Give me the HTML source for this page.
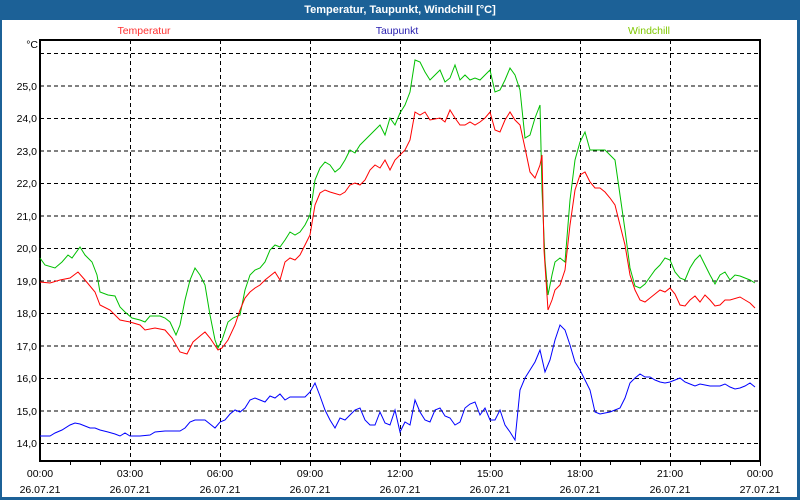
<!DOCTYPE html>
<html><head><meta charset="utf-8"><style>
html,body{margin:0;padding:0;background:#fff}
svg{display:block;font-family:"Liberation Sans",sans-serif}
</style></head><body>
<svg width="800" height="500" xmlns="http://www.w3.org/2000/svg">
<rect x="0" y="0" width="800" height="500" fill="#1c6197"/>
<rect x="2" y="20" width="795" height="477" fill="#fff"/>
<text x="400" y="13" fill="#fff" font-size="11" font-weight="bold" text-anchor="middle">Temperatur, Taupunkt, Windchill [°C]</text>
<text x="144" y="34" fill="#ff3030" font-size="10.5" text-anchor="middle">Temperatur</text>
<text x="397" y="34" fill="#2a20b0" font-size="10.5" text-anchor="middle">Taupunkt</text>
<text x="649" y="34" fill="#80c800" font-size="10.5" text-anchor="middle">Windchill</text>
<g stroke="#000" stroke-width="1" stroke-dasharray="4,3" fill="none">
<path d="M40 53.5H760M40 86H760M40 118.5H760M40 151H760M40 183.5H760M40 216H760M40 248.5H760M40 281H760M40 313.5H760M40 346H760M40 378.5H760M40 411H760M40 443.5H760"/>
<path d="M130.5 40V461M220.5 40V461M310.5 40V461M400.5 40V461M490.5 40V461M580.5 40V461M670.5 40V461"/>
</g>
<g stroke="#000" stroke-width="1">
<path d="M70.5 461V465M100.5 461V465M130.5 461V466M160.5 461V465M190.5 461V465M220.5 461V466M250.5 461V465M280.5 461V465M310.5 461V466M340.5 461V465M370.5 461V465M400.5 461V466M430.5 461V465M460.5 461V465M490.5 461V466M520.5 461V465M550.5 461V465M580.5 461V466M610.5 461V465M640.5 461V465M670.5 461V466M700.5 461V465M730.5 461V465M760.5 461V466"/>
</g>
<rect x="40" y="40" width="720" height="421" fill="none" stroke="#000" stroke-width="2"/>
<g font-size="10.5" fill="#000" text-anchor="end">
<text x="38" y="48">°C</text>
<text x="37" y="90">25,0</text><text x="37" y="122">24,0</text><text x="37" y="155">23,0</text><text x="37" y="187">22,0</text><text x="37" y="220">21,0</text><text x="37" y="252">20,0</text><text x="37" y="285">19,0</text><text x="37" y="317">18,0</text><text x="37" y="350">17,0</text><text x="37" y="382">16,0</text><text x="37" y="415">15,0</text><text x="37" y="447">14,0</text>
</g>
<g font-size="10.5" fill="#000" text-anchor="middle">
<text x="40" y="477">00:00</text><text x="130" y="477">03:00</text><text x="220" y="477">06:00</text><text x="310" y="477">09:00</text><text x="400" y="477">12:00</text><text x="490" y="477">15:00</text><text x="580" y="477">18:00</text><text x="670" y="477">21:00</text><text x="760" y="477">00:00</text>
<text x="40" y="493">26.07.21</text><text x="130" y="493">26.07.21</text><text x="220" y="493">26.07.21</text><text x="310" y="493">26.07.21</text><text x="400" y="493">26.07.21</text><text x="490" y="493">26.07.21</text><text x="580" y="493">26.07.21</text><text x="670" y="493">26.07.21</text><text x="760" y="493">27.07.21</text>
</g>
<g fill="none" stroke-width="1">
<polyline stroke="#00c000" points="40,258 45,265 55,268 62,262 68,255 72,258 80,247 85,255 92,262 97,275 100,292 108,295 115,296 120,307 125,312 132,318 140,320 145,322 150,316 160,316 165,318 170,322 176,335 180,325 185,300 190,280 195,268 200,275 205,285 210,315 215,340 218,348 222,340 228,322 233,318 240,315 245,290 250,275 255,270 260,268 265,262 270,250 275,245 280,247 285,240 290,232 295,235 300,232 305,225 310,215 315,180 320,168 325,162 330,165 335,172 340,168 345,160 350,150 355,153 360,145 365,140 370,135 375,130 380,125 385,135 390,118 395,125 400,113 405,105 410,92 415,60 420,62 425,72 430,80 435,75 440,70 445,82 450,78 455,65 460,80 465,75 470,80 475,78 480,80 485,75 490,70 495,92 500,90 505,80 510,68 515,75 520,90 525,138 530,135 535,118 540,105 542,190 545,260 548,295 552,275 555,262 560,258 565,262 570,200 575,160 580,142 585,132 590,150 595,150 600,150 605,150 610,155 615,160 620,195 625,230 630,268 635,286 640,288 645,284 650,277 655,270 660,265 665,258 670,260 675,272 680,278 685,280 690,268 695,260 700,255 705,265 710,275 715,284 720,275 725,272 730,280 735,275 740,276 745,278 750,280 755,283"/>
<polyline stroke="#ff0000" points="40,282 50,283 60,280 70,278 78,272 85,280 95,292 100,305 110,310 120,320 130,322 140,325 145,330 155,328 165,330 172,338 180,352 187,354 193,342 200,336 205,332 210,338 218,350 222,348 228,340 235,325 240,310 245,298 250,292 255,288 260,285 265,280 275,272 280,280 285,262 290,258 295,260 300,255 305,245 310,235 315,205 320,193 325,190 330,192 340,195 345,192 350,185 355,183 360,185 365,180 370,170 375,165 380,168 385,160 390,170 395,160 400,155 405,150 410,140 415,112 420,115 425,112 430,120 440,118 445,122 450,110 455,118 460,125 465,125 470,122 475,125 480,122 485,118 490,112 495,130 500,132 505,120 510,112 515,120 520,125 525,148 530,172 535,178 540,165 542,155 544,250 548,310 552,300 555,290 560,285 565,270 570,225 575,190 580,175 585,172 590,182 595,188 600,188 605,192 610,198 615,205 620,225 625,245 630,275 635,290 640,300 645,302 650,298 655,294 660,290 665,292 670,288 675,294 680,305 685,306 690,300 695,296 700,302 705,295 710,300 715,306 720,305 725,300 730,300 740,297 745,300 750,303 755,308"/>
<polyline stroke="#0000ff" points="40,436 50,436 55,433 62,430 70,425 75,423 80,424 85,426 90,428 95,428 100,430 108,432 115,434 120,436 125,433 130,436 140,436 150,435 155,432 165,431 180,431 185,428 190,422 195,420 205,420 210,424 215,428 220,422 225,420 230,414 235,410 240,412 245,408 250,400 255,398 260,400 265,402 270,396 275,398 280,394 285,400 290,397 300,397 305,397 310,392 315,383 320,396 325,410 330,420 335,428 340,418 345,420 350,415 355,410 360,408 365,420 370,425 375,425 380,412 385,423 390,425 395,410 400,432 405,422 410,425 415,400 420,412 425,420 430,422 435,410 440,408 445,416 450,418 455,425 460,422 465,408 470,404 475,402 480,415 485,408 490,420 495,420 500,410 505,425 510,432 515,440 520,390 525,378 530,370 535,362 540,350 545,372 550,360 555,340 560,325 565,330 570,345 575,362 580,370 585,380 590,390 595,412 600,414 605,413 610,412 615,410 620,408 625,398 630,383 635,378 640,374 645,377 650,377 655,380 660,382 665,383 670,382 675,380 680,378 685,382 690,384 695,386 700,384 705,385 710,386 715,386 720,386 725,384 730,387 735,389 740,388 745,386 750,383 755,387"/>
</g>
</svg>
</body></html>
